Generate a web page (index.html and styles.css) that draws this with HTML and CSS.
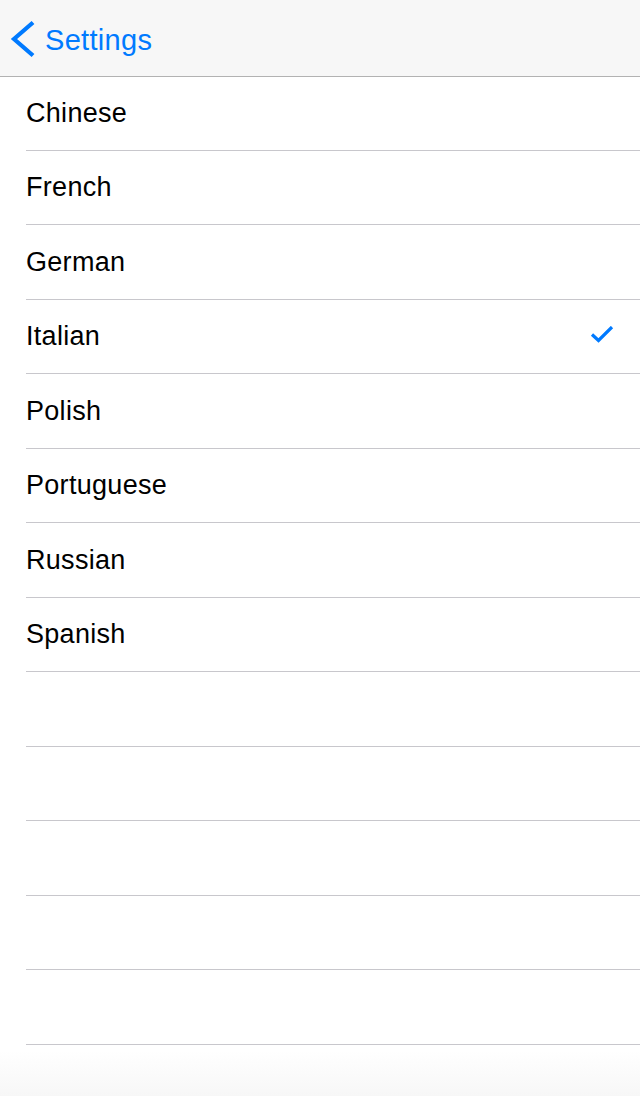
FILE: index.html
```html
<!DOCTYPE html>
<html>
<head>
<meta charset="utf-8">
<link rel="stylesheet" href="styles.css">
</head>
<body>
<div class="screen">
  <header class="navbar">
    <a class="back">
      <svg class="chev" width="26" height="40" viewBox="0 0 26 40"><path d="M23 3.5 L4 20 L23 36.5" fill="none" stroke="#007aff" stroke-width="4.2" stroke-linecap="butt" stroke-linejoin="miter"/></svg>
      <span class="back-label">Settings</span>
    </a>
  </header>
  <ul class="list">
    <li class="row"><span class="label">Chinese</span></li>
    <li class="row"><span class="label">French</span></li>
    <li class="row"><span class="label">German</span></li>
    <li class="row"><span class="label">Italian</span>
      <svg class="check" width="24" height="20" viewBox="0 0 24 20"><path d="M2 8.5 L8.5 14.5 L22 1" fill="none" stroke="#007aff" stroke-width="3.2"/></svg>
    </li>
    <li class="row"><span class="label">Polish</span></li>
    <li class="row"><span class="label">Portuguese</span></li>
    <li class="row"><span class="label">Russian</span></li>
    <li class="row"><span class="label">Spanish</span></li>
    <li class="row"></li>
    <li class="row"></li>
    <li class="row"></li>
    <li class="row"></li>
    <li class="row"></li>
  </ul>
  <div class="fade"></div>
</div>
</body>
</html>
```
FILE: styles.css
```css
* { box-sizing: border-box; }
html, body { margin: 0; padding: 0; background: #fff; }
body { font-family: "Liberation Sans", Arial, sans-serif; }
.screen { width: 640px; height: 1096px; overflow: hidden; display: flex; flex-direction: column; }
.navbar {
  height: 77px;
  flex: none;
  background: #f7f7f7;
  border-bottom: 1px solid #b2b2b2;
  display: flex;
  align-items: center;
  padding-left: 10px;
}
.back { display: flex; align-items: center; color: #007aff; text-decoration: none; }
.chev { display: block; margin-top: 1px; }
.back-label { font-size: 29px; margin-left: 9px; margin-top: 4px; letter-spacing: 0.3px; }
.list { list-style: none; margin: -1px 0 0 0; padding: 0 0 0 26px; flex: none; }
.row {
  height: 74.5px;
  border-bottom: 1px solid #c8c7cc;
  display: flex;
  align-items: center;
  justify-content: space-between;
  padding-right: 26px;
}
.label { font-size: 27px; color: #000; letter-spacing: 0.3px; margin-top: 1px; }
.check { display: block; margin-right: 0; }
.fade { flex: 1; background: linear-gradient(#ffffff 0%, #ffffff 10%, #f7f7f7 100%); }
```
